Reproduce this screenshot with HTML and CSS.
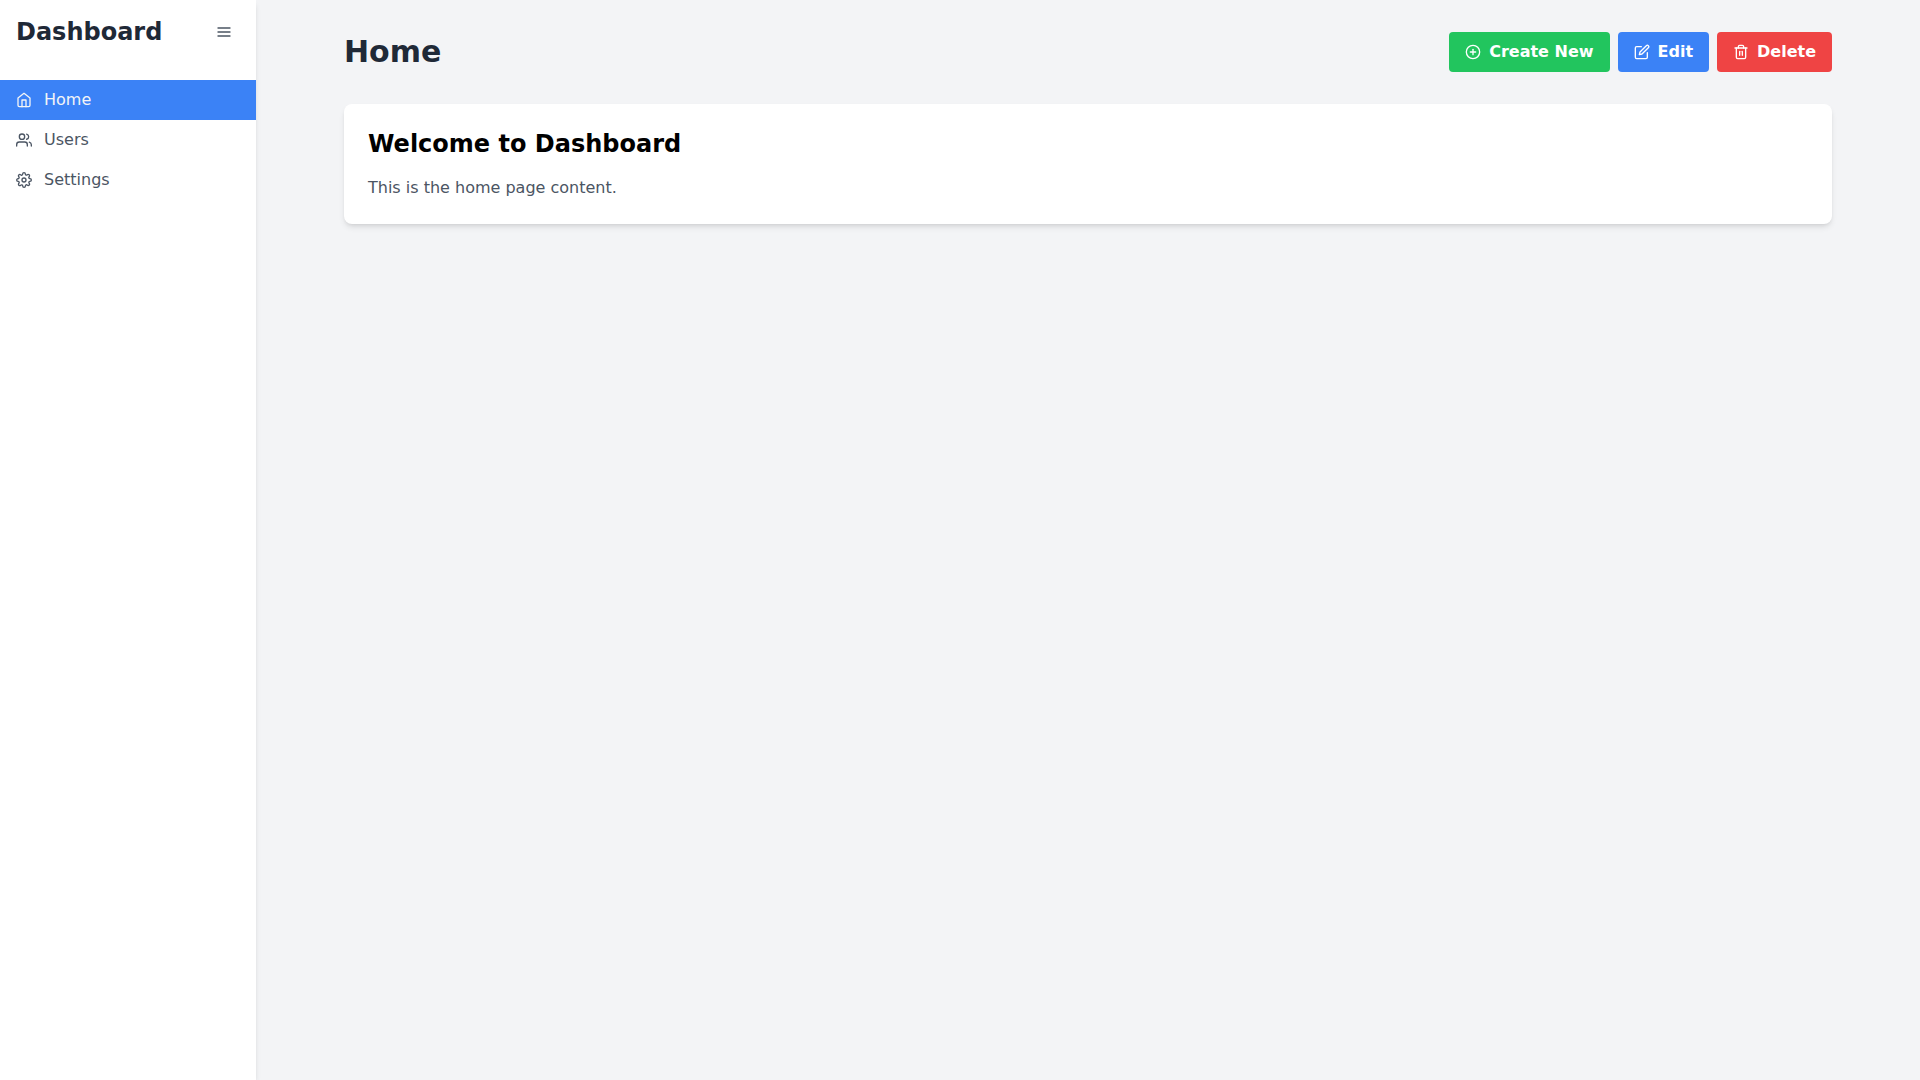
FILE: index.html
```html
<!DOCTYPE html>
<html lang="en">
<head>
<meta charset="utf-8">
<meta name="viewport" content="width=device-width, initial-scale=1">
<title>Dashboard</title>
<link rel="stylesheet" href="styles.css">
</head>
<body>
<div class="layout">
  <aside class="sidebar">
    <div class="sidebar-header">
      <h2 class="brand">Dashboard</h2>
      <button class="menu-toggle" type="button" aria-label="Toggle menu">
        <svg class="icon" viewBox="0 0 24 24"><line x1="3" y1="12" x2="21" y2="12"/><line x1="3" y1="6" x2="21" y2="6"/><line x1="3" y1="18" x2="21" y2="18"/></svg>
      </button>
    </div>
    <nav class="nav">
      <a class="nav-link active" href="#home">
        <svg class="icon" viewBox="0 0 24 24"><path d="M3 9l9-7 9 7v11a2 2 0 0 1-2 2H5a2 2 0 0 1-2-2z"/><polyline points="9 22 9 12 15 12 15 22"/></svg>
        <span>Home</span>
      </a>
      <a class="nav-link" href="#users">
        <svg class="icon" viewBox="0 0 24 24"><path d="M17 21v-2a4 4 0 0 0-4-4H5a4 4 0 0 0-4 4v2"/><circle cx="9" cy="7" r="4"/><path d="M23 21v-2a4 4 0 0 0-3-3.87"/><path d="M16 3.13a4 4 0 0 1 0 7.75"/></svg>
        <span>Users</span>
      </a>
      <a class="nav-link" href="#settings">
        <svg class="icon" viewBox="0 0 24 24"><circle cx="12" cy="12" r="3"/><path d="M19.4 15a1.65 1.65 0 0 0 .33 1.82l.06.06a2 2 0 0 1 0 2.83 2 2 0 0 1-2.83 0l-.06-.06a1.65 1.65 0 0 0-1.82-.33 1.65 1.65 0 0 0-1 1.51V21a2 2 0 0 1-2 2 2 2 0 0 1-2-2v-.09A1.65 1.65 0 0 0 9 19.4a1.65 1.65 0 0 0-1.82.33l-.06.06a2 2 0 0 1-2.83 0 2 2 0 0 1 0-2.83l.06-.06a1.65 1.65 0 0 0 .33-1.82 1.65 1.65 0 0 0-1.51-1H3a2 2 0 0 1-2-2 2 2 0 0 1 2-2h.09A1.65 1.65 0 0 0 4.6 9a1.65 1.65 0 0 0-.33-1.82l-.06-.06a2 2 0 0 1 0-2.83 2 2 0 0 1 2.83 0l.06.06a1.65 1.65 0 0 0 1.82.33H9a1.65 1.65 0 0 0 1-1.51V3a2 2 0 0 1 2-2 2 2 0 0 1 2 2v.09a1.65 1.65 0 0 0 1 1.51 1.65 1.65 0 0 0 1.82-.33l.06-.06a2 2 0 0 1 2.83 0 2 2 0 0 1 0 2.83l-.06.06a1.65 1.65 0 0 0-.33 1.82V9a1.65 1.65 0 0 0 1.51 1H21a2 2 0 0 1 2 2 2 2 0 0 1-2 2h-.09a1.65 1.65 0 0 0-1.51 1z"/></svg>
        <span>Settings</span>
      </a>
    </nav>
  </aside>
  <main class="main">
    <div class="container">
      <header class="page-header">
        <h1 class="page-title">Home</h1>
        <div class="actions">
          <button class="btn btn-create" type="button">
            <svg class="icon" viewBox="0 0 24 24"><circle cx="12" cy="12" r="10"/><line x1="12" y1="8" x2="12" y2="16"/><line x1="8" y1="12" x2="16" y2="12"/></svg>
            Create New
          </button>
          <button class="btn btn-edit" type="button">
            <svg class="icon" viewBox="0 0 24 24"><path d="M11 4H4a2 2 0 0 0-2 2v14a2 2 0 0 0 2 2h14a2 2 0 0 0 2-2v-7"/><path d="M18.5 2.5a2.121 2.121 0 0 1 3 3L12 15l-4 1 1-4 9.5-9.5z"/></svg>
            Edit
          </button>
          <button class="btn btn-delete" type="button">
            <svg class="icon" viewBox="0 0 24 24"><polyline points="3 6 5 6 21 6"/><path d="M19 6v14a2 2 0 0 1-2 2H7a2 2 0 0 1-2-2V6m3 0V4a2 2 0 0 1 2-2h4a2 2 0 0 1 2 2v2"/><line x1="10" y1="11" x2="10" y2="17"/><line x1="14" y1="11" x2="14" y2="17"/></svg>
            Delete
          </button>
        </div>
      </header>
      <section class="card">
        <h2 class="card-title">Welcome to Dashboard</h2>
        <p class="card-text">This is the home page content.</p>
      </section>
    </div>
  </main>
</div>
</body>
</html>
```

FILE: styles.css
```css
*,
*::before,
*::after {
  box-sizing: border-box;
}

body {
  margin: 0;
  font-family: "DejaVu Sans", sans-serif;
  font-size: 16px;
  line-height: 24px;
  color: #000;
}

h1,
h2,
p {
  margin: 0;
}

button {
  border: 0;
  font: inherit;
  cursor: pointer;
}

.icon {
  width: 16px;
  height: 16px;
  flex: none;
  fill: none;
  stroke: currentColor;
  stroke-width: 2;
  stroke-linecap: round;
  stroke-linejoin: round;
}

.layout {
  display: flex;
  min-height: 100vh;
  background: #f3f4f6;
}

.sidebar {
  width: 256px;
  flex: none;
  background: #fff;
  box-shadow: 0 4px 6px -1px rgba(0, 0, 0, 0.1), 0 2px 4px -2px rgba(0, 0, 0, 0.1);
}

.sidebar-header {
  display: flex;
  align-items: center;
  justify-content: space-between;
  padding: 16px;
}

.brand {
  font-size: 24px;
  line-height: 32px;
  color: #1f2937;
}

.menu-toggle {
  display: flex;
  padding: 8px;
  border-radius: 6px;
  background: transparent;
  color: #4b5563;
}

.nav {
  margin-top: 16px;
}

.nav-link {
  display: flex;
  align-items: center;
  gap: 12px;
  padding: 8px 16px;
  color: #4b5563;
  text-decoration: none;
}

.nav-link.active {
  background: #3b82f6;
  color: #f3f4f6;
}

.main {
  flex: 1;
}

.container {
  max-width: 1536px;
  margin: 0 auto;
  padding: 32px 24px;
}

.page-header {
  display: flex;
  align-items: center;
  justify-content: space-between;
  margin-bottom: 32px;
}

.page-title {
  font-size: 30px;
  line-height: 36px;
  color: #1f2937;
}

.actions {
  display: flex;
  gap: 8px;
}

.btn {
  display: flex;
  align-items: center;
  gap: 8px;
  padding: 8px 16px;
  border-radius: 4px;
  font-weight: 700;
  color: #fff;
}

.btn-create {
  background: #22c55e;
}

.btn-edit {
  background: #3b82f6;
}

.btn-delete {
  background: #ef4444;
}

.card {
  padding: 24px;
  border-radius: 8px;
  background: #fff;
  box-shadow: 0 4px 6px -1px rgba(0, 0, 0, 0.1), 0 2px 4px -2px rgba(0, 0, 0, 0.1);
}

.card-title {
  margin-bottom: 16px;
  font-size: 24px;
  line-height: 32px;
}

.card-text {
  color: #4b5563;
}
```
